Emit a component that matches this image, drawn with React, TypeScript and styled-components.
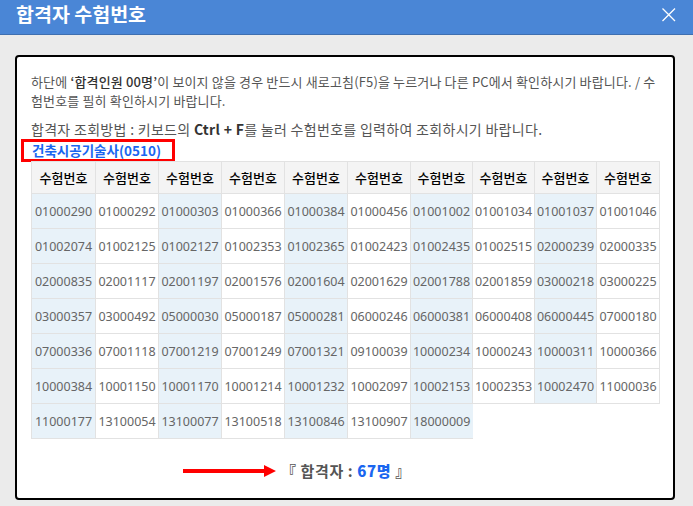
import { createGlobalStyle } from "styled-components"
import styled from "styled-components"

const GlobalStyle = createGlobalStyle`
    html, body {
        margin: 0;
        padding: 0;
        background: #ebebeb;
        overflow: hidden;
    }
    body {
        font-family: "Noto Sans", "Noto Sans CJK KR", sans-serif;
        color: #555;
    }
`

const Page = styled.div`
    width: 693px;
    height: 506px;
    overflow: hidden;
`

const TitleBar = styled.header`
    display: flex;
    align-items: center;
    justify-content: space-between;
    box-sizing: border-box;
    height: 35px;
    padding: 0 17px 6px 16px;
    background: #4a86d6;
    border-bottom: 1px solid #3f6fb0;
`

const Title = styled.h1`
    margin: 0;
    font-family: "Noto Sans CJK KR", sans-serif;
    font-size: 19.5px;
    line-height: 24px;
    font-weight: 700;
    color: #fff;
`

const CloseIcon = styled.svg`
    display: block;
    width: 15px;
    height: 15px;
`

const Content = styled.main`
    padding: 20px 18px 0 15px;
`

const Card = styled.section`
    box-sizing: border-box;
    width: 660px;
    height: 445px;
    padding: 15px 14px 0 14px;
    background: #fff;
    border: 2px solid #000;
    border-radius: 4px;
`

const Notice = styled.p`
    margin: 0 0 10px;
    font-family: "Noto Sans CJK KR", sans-serif;
    font-size: 13px;
    letter-spacing: 0.15px;
    line-height: 19px;
    word-break: break-all;
    color: #555;

    strong {
        font-weight: 500;
        color: #333;
    }
`

const Guide = styled(Notice)`
    margin: 0;
    font-size: 14px;
    letter-spacing: 0.3px;

    strong {
        font-weight: 700;
    }
`

const Heading = styled.div`
    box-sizing: border-box;
    width: 154px;
    height: 23px;
    margin-left: -10px;
    padding-left: 8px;
    border: 3px solid #f00;
    font-family: "Noto Sans CJK KR", sans-serif;
    font-size: 13.5px;
    font-weight: 700;
    line-height: 16px;
    color: #1a66f0;
`

const Table = styled.table`
    width: 628px;
    margin-top: -1px;
    table-layout: fixed;
    border-collapse: collapse;

    tbody tr:last-child td:last-child {
        border-right: none;
    }
`

const HeadCell = styled.th`
    height: 31px;
    padding: 0;
    background: #f4f4f4;
    border: 1px solid #e2e2e2;
    font-family: "Noto Sans CJK KR", sans-serif;
    font-size: 13px;
    font-weight: 500;
    color: #000;
`

const Cell = styled.td<{ $tinted: boolean }>`
    height: 34px;
    padding: 0;
    background: ${(p) => (p.$tinted ? "#e8f2f9" : "#fff")};
    border: 1px solid #e2e2e2;
    font-size: 12.5px;
    text-align: center;
    color: #666;
`

const Footer = styled.div`
    display: flex;
    align-items: center;
    justify-content: flex-start;
    gap: 5px;
    margin: 21px 0 0 152px;
`

const Arrow = styled.svg`
    display: block;
    width: 93px;
    height: 14px;
`

const Total = styled.div`
    font-family: "Noto Sans CJK KR", sans-serif;
    font-size: 15px;
    letter-spacing: 0.6px;
    font-weight: 700;
    color: #555;

    b {
        color: #1a66f0;
    }
`

const numbers = `01000290 01000292 01000303 01000366 01000384 01000456 01001002 01001034 01001037 01001046
01002074 01002125 01002127 01002353 01002365 01002423 01002435 01002515 02000239 02000335
02000835 02001117 02001197 02001576 02001604 02001629 02001788 02001859 03000218 03000225
03000357 03000492 05000030 05000187 05000281 06000246 06000381 06000408 06000445 07000180
07000336 07001118 07001219 07001249 07001321 09100039 10000234 10000243 10000311 10000366
10000384 10001150 10001170 10001214 10001232 10002097 10002153 10002353 10002470 11000036
11000177 13100054 13100077 13100518 13100846 13100907 18000009`
    .split("\n")
    .map((row) => row.split(" "))

const colWidths = [64, 63, 63, 63, 63, 63, 62, 62, 62, 63]

const App = () => {
    return (
        <Page>
            <GlobalStyle />
            <TitleBar>
                <Title>합격자 수험번호</Title>
                <CloseIcon viewBox="0 0 15 15">
                    <path d="M1.5 1.5L14 14M14 1.5L1.5 14" stroke="#fff" strokeWidth="1.3" fill="none" />
                </CloseIcon>
            </TitleBar>
            <Content>
                <Card>
                    <Notice>
                        하단에 <strong>‘합격인원 00명’</strong>이 보이지 않을 경우 반드시 새로고침(F5)을 누르거나 다른 PC에서 확인하시기 바랍니다. / 수험번호를 필히 확인하시기 바랍니다.
                    </Notice>
                    <Guide>
                        합격자 조회방법 : 키보드의 <strong>Ctrl + F</strong>를 눌러 수험번호를 입력하여 조회하시기 바랍니다.
                    </Guide>
                    <Heading>건축시공기술사(0510)</Heading>
                    <Table>
                        <colgroup>
                            {colWidths.map((w, i) => (
                                <col key={i} width={w} />
                            ))}
                        </colgroup>
                        <thead>
                            <tr>
                                {numbers[0].map((_, i) => (
                                    <HeadCell key={i}>수험번호</HeadCell>
                                ))}
                            </tr>
                        </thead>
                        <tbody>
                            {numbers.map((row, r) => (
                                <tr key={r}>
                                    {row.map((n, i) => (
                                        <Cell key={n} $tinted={i % 2 === 0}>
                                            {n}
                                        </Cell>
                                    ))}
                                </tr>
                            ))}
                        </tbody>
                    </Table>
                    <Footer>
                        <Arrow viewBox="0 0 93 14">
                            <path d="M0 5H81V1L93 7L81 13V9H0Z" fill="#f00" />
                        </Arrow>
                        <Total>
                            『 합격자 : <b>67명</b> 』
                        </Total>
                    </Footer>
                </Card>
            </Content>
        </Page>
    )
}

export default App
